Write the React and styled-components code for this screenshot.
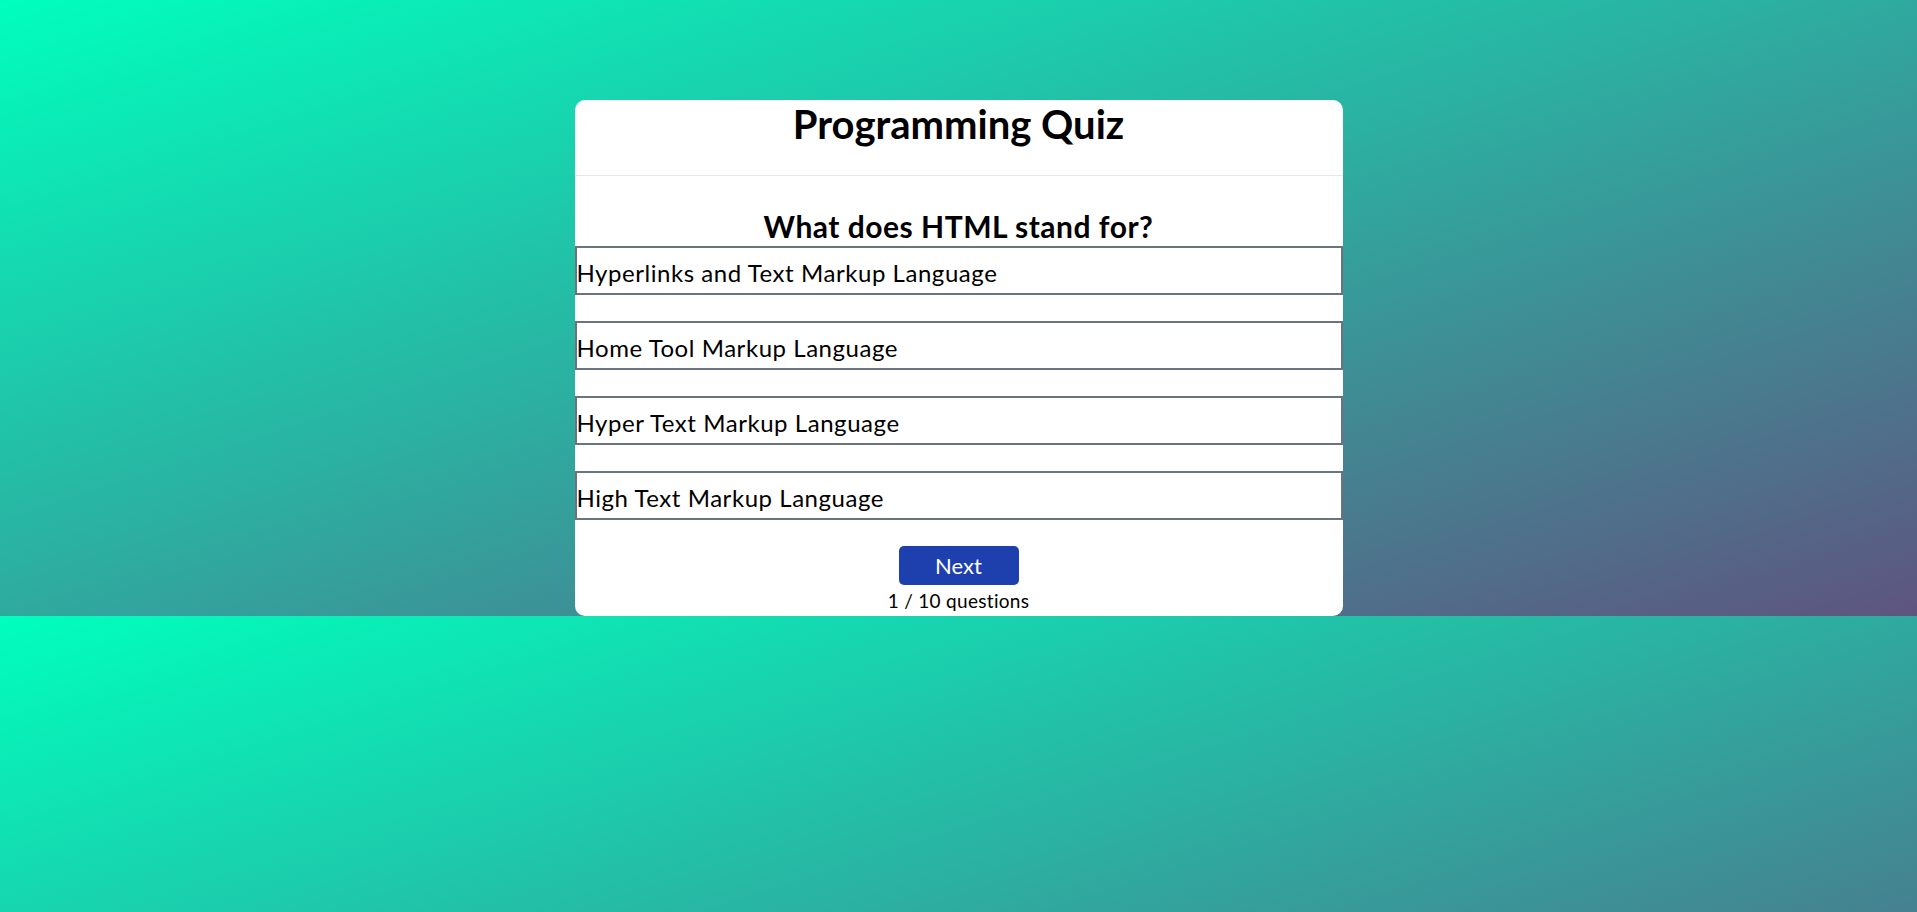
import React, { useState } from "react";
import styled, { createGlobalStyle } from "styled-components";

const questions = [
    {
        question: "What does HTML stand for?",
        answers: [
            "Hyperlinks and Text Markup Language",
            "Home Tool Markup Language",
            "Hyper Text Markup Language",
            "High Text Markup Language",
        ],
    },
];

const GlobalStyle = createGlobalStyle`
    body {
        margin: 0;
        font-family: Lato, "Noto Sans", sans-serif;
        background: linear-gradient(to bottom right, #00ffbe, #5e5480);
    }
`;

const App = () => {
    const [current] = useState(0);
    const q = questions[current];

    return (
        <>
            <GlobalStyle />
            <Page>
                <Card>
                    <Header>
                        <Title>Programming Quiz</Title>
                    </Header>
                    <Body>
                        <Question>{q.question}</Question>
                        {q.answers.map((a) => (
                            <Answer key={a}>{a}</Answer>
                        ))}
                        <NextBtn>Next</NextBtn>
                        <Counter>{current + 1} / 10 questions</Counter>
                    </Body>
                </Card>
            </Page>
        </>
    );
};

const Page = styled.div`
    padding-top: 100px;
`;

const Card = styled.div`
    width: 768px;
    margin: 0 auto;
    background: #ffffff;
    border-radius: 10px;
    overflow: hidden;
`;

const Header = styled.div`
    height: 75px;
    border-bottom: 1px solid #e5e7eb;
    text-align: center;
`;

const Title = styled.h1`
    margin: 0;
    font-size: 40px;
    line-height: 48px;
    font-weight: 700;
    color: #000;
`;

const Body = styled.div`
    padding-top: 30px;
    display: flex;
    flex-direction: column;
    align-items: center;
`;

const Question = styled.h2`
    margin: 0;
    font-size: 30px;
    line-height: 40px;
    font-weight: 700;
    letter-spacing: 0.5px;
    color: #000;
`;

const Answer = styled.div`
    box-sizing: border-box;
    align-self: stretch;
    height: 49px;
    margin-bottom: 26px;
    padding-top: 13px;
    border: 2px solid #6b7280;
    font-size: 24px;
    line-height: 24px;
    letter-spacing: 0.55px;
    color: #000;
    cursor: pointer;
`;

const NextBtn = styled.button`
    width: 120px;
    height: 39px;
    border: none;
    border-radius: 5px;
    background: #1e40af;
    color: #fff;
    font-family: inherit;
    font-size: 22px;
    line-height: 39px;
    padding: 0;
    cursor: pointer;
`;

const Counter = styled.div`
    font-size: 19px;
    line-height: 31px;
    letter-spacing: 0.3px;
    color: #000;
`;

export default App;
